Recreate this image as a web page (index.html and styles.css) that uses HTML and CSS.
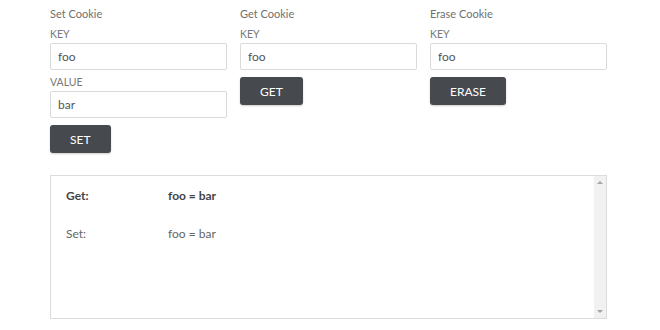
FILE: index.html
```html
<!DOCTYPE html>
<html>
 <head>
  <title>Cookies</title>
  <link rel="stylesheet" href="styles.css">
 </head>
 <body>
  <div id="content">
   <div class="forms">
    <div class="form">
     <div class="title">Set Cookie</div>
     <div class="field">
      <label>KEY</label>
      <input type="text" value="foo" />
     </div>
     <div class="field">
      <label>VALUE</label>
      <input type="text" value="bar" />
     </div>
     <button type="button">Set</button>
    </div>

    <div class="form">
     <div class="title">Get Cookie</div>
     <div class="field">
      <label>KEY</label>
      <input type="text" value="foo" />
     </div>
     <button type="button">Get</button>
    </div>

    <div class="form">
     <div class="title">Erase Cookie</div>
     <div class="field">
      <label>KEY</label>
      <input type="text" value="foo" />
     </div>
     <button type="button">Erase</button>
    </div>
   </div>

   <div class="output">
    <div class="log">
     <div class="row get">
      <span class="name">Get:</span>
      <span class="value">foo = bar</span>
     </div>
     <div class="row">
      <span class="name">Set:</span>
      <span class="value">foo = bar</span>
     </div>
    </div>
    <div class="scrollbar">
     <span class="arrow up"></span>
     <span class="arrow down"></span>
    </div>
   </div>
  </div>
 </body>
</html>
```

FILE: styles.css
```css
body {
 margin:      0;
 font-family: Lato, "Liberation Sans", sans-serif;
 font-size:   12px;
 color:       #666666;
 background:  #ffffff;
}

#content {
 width:   557px;
 padding: 6px 0 0 50px;
}

.forms {
 display:               grid;
 grid-template-columns: repeat(3, 1fr);
 column-gap:            13px;
 align-items:           start;
}

.form {
 display:        flex;
 flex-direction: column;
 align-items:    flex-start;
}

.title {
 font-size:     11px;
 line-height:   16px;
 color:         #707070;
 margin-bottom: 4px;
}

.field {
 width:         100%;
 margin-bottom: 4px;
}

.field label {
 display:       block;
 font-size:     10.5px;
 line-height:   16px;
 color:         #777777;
 margin-bottom: 1px;
}

.field input {
 display:       block;
 box-sizing:    border-box;
 width:         100%;
 height:        27px;
 padding:       0 7px;
 border:        1px solid #dadada;
 border-radius: 2px;
 font-family:   Lato, "Liberation Sans", sans-serif;
 font-size:     12px;
 color:         #555555;
 outline:       none;
}

button {
 margin-top:     3px;
 height:         28px;
 padding:        0 20px;
 border:         0;
 border-radius:  3px;
 background:     #46494e;
 box-shadow:     0 1px 2px rgba(0, 0, 0, 0.2);
 color:          #ffffff;
 font-family:    Lato, "Liberation Sans", sans-serif;
 font-size:      12px;
 font-weight:    normal;
 text-transform: uppercase;
}

.output {
 display:    flex;
 box-sizing: border-box;
 margin-top: 22px;
 height:     144px;
 border:     1px solid #dcdcdc;
}

.log {
 flex:    1;
 padding: 11px 15px;
}

.row {
 display:       flex;
 line-height:   18px;
 margin-bottom: 20px;
}

.row .name {
 width: 102px;
}

.row.get {
 font-weight: bold;
 color:       #444444;
}

.scrollbar {
 display:         flex;
 flex-direction:  column;
 justify-content: space-between;
 align-items:     center;
 width:           12px;
 padding:         5px 0;
 background:      #f1f1f1;
}

.arrow {
 width:        0;
 height:       0;
 border-left:  3px solid transparent;
 border-right: 3px solid transparent;
}

.arrow.up {
 border-bottom: 3px solid #a3a3a3;
}

.arrow.down {
 border-top: 3px solid #a3a3a3;
}
```
